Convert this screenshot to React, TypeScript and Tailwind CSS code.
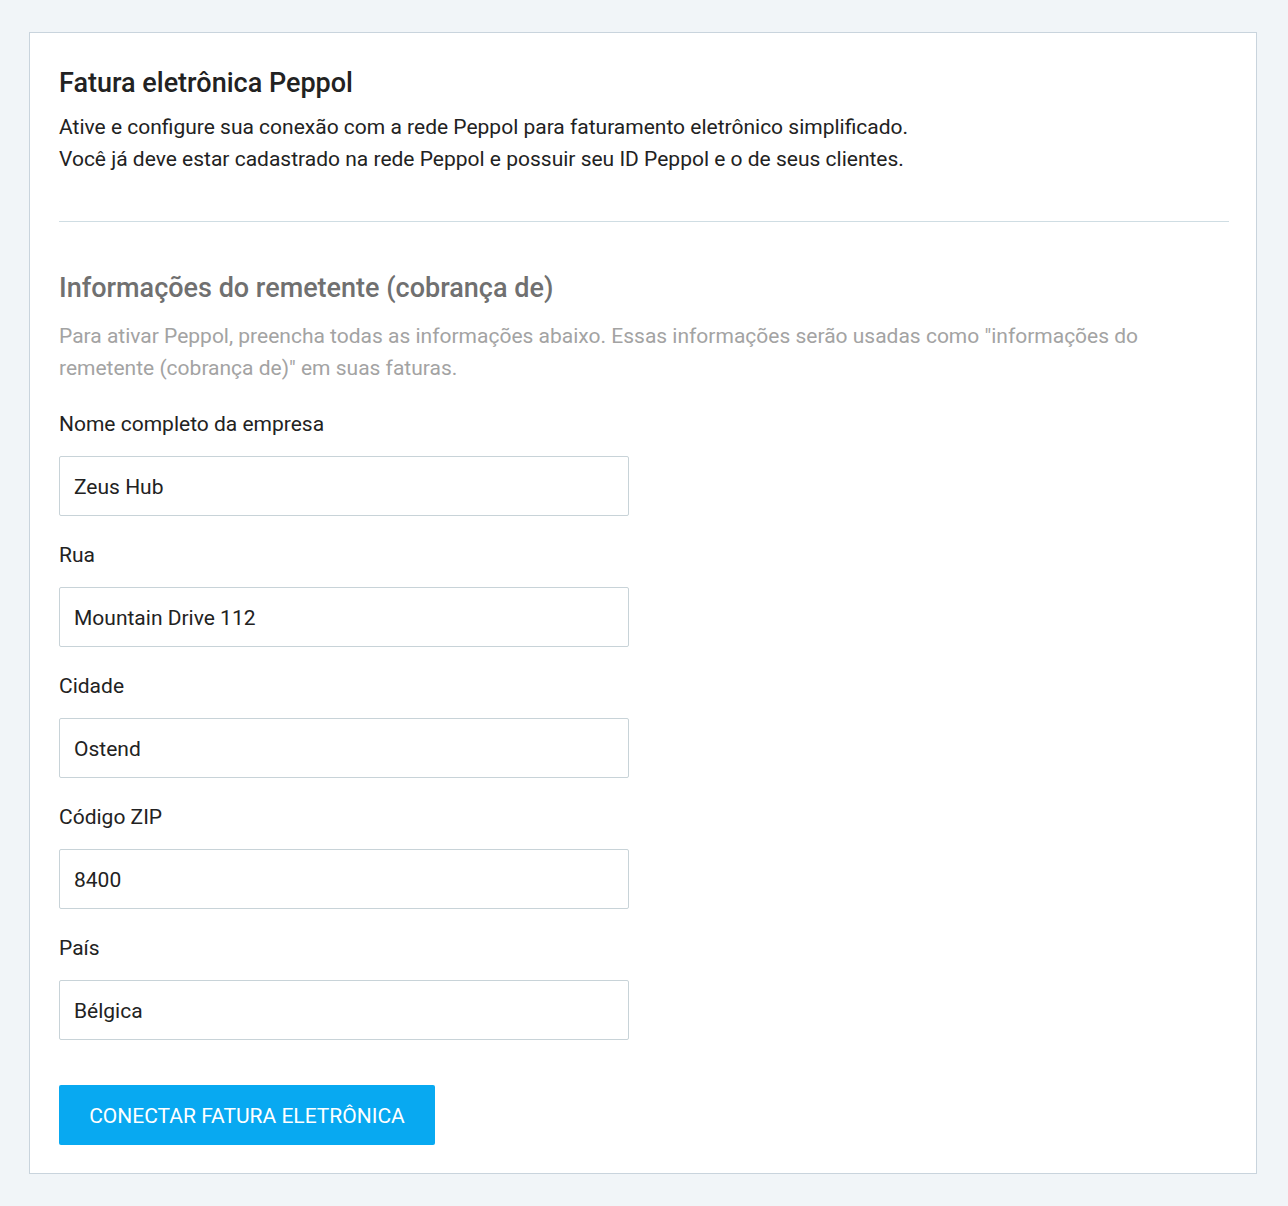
import React from "react";

const fields = [
  { label: "Nome completo da empresa", value: "Zeus Hub" },
  { label: "Rua", value: "Mountain Drive 112" },
  { label: "Cidade", value: "Ostend" },
  { label: "Código ZIP", value: "8400" },
  { label: "País", value: "Bélgica" },
];

export default function App() {
  return (
    <div
      className="min-h-[1206px] bg-[#f1f5f8] pt-[32px] pl-[29px] pr-[31px] pb-[31px]"
      style={{ fontFamily: "Roboto, 'Noto Sans', Arial, sans-serif" }}
    >
      <div className="border border-[#c9d4dd] bg-white pl-[29px] pr-[27px] pt-[30px] pb-[28px]">
        <h1 className="text-[27px] leading-[40px] font-medium text-[#222]">
          Fatura eletrônica Peppol
        </h1>
        <div className="mt-[8px] text-[21px] leading-[32px] text-[#222]">
          <p>Ative e configure sua conexão com a rede Peppol para faturamento eletrônico simplificado.</p>
          <p>Você já deve estar cadastrado na rede Peppol e possuir seu ID Peppol e o de seus clientes.</p>
        </div>
        <div className="mt-[46px] h-px bg-[#cfdde3]" />

        <h2 className="mt-[48px] text-[27px] leading-[36px] font-medium text-[#707070]">
          Informações do remetente (cobrança de)
        </h2>
        <p className="mt-[14px] pr-[62px] text-[21px] leading-[32px] text-[#a3a3a3]">
          Para ativar Peppol, preencha todas as informações abaixo. Essas informações serão usadas como "informações do
          remetente (cobrança de)" em suas faturas.
        </p>

        <div className="mt-[24px] flex flex-col gap-[23px]">
          {fields.map((f) => (
            <div key={f.label} className="flex flex-col gap-[16px]">
              <label className="text-[21px] leading-[32px] text-[#222]">{f.label}</label>
              <input
                readOnly
                value={f.value}
                className="h-[60px] w-[570px] rounded-[2px] border border-[#c8d3d8] bg-white px-[14px] pt-[2px] text-[21px] text-[#222] outline-none"
              />
            </div>
          ))}
        </div>

        <button className="mt-[45px] h-[60px] w-[376px] rounded-[2px] bg-[#08a9f1] pt-[3px] text-[21px] uppercase text-white">
          Conectar fatura eletrônica
        </button>
      </div>
    </div>
  );
}
